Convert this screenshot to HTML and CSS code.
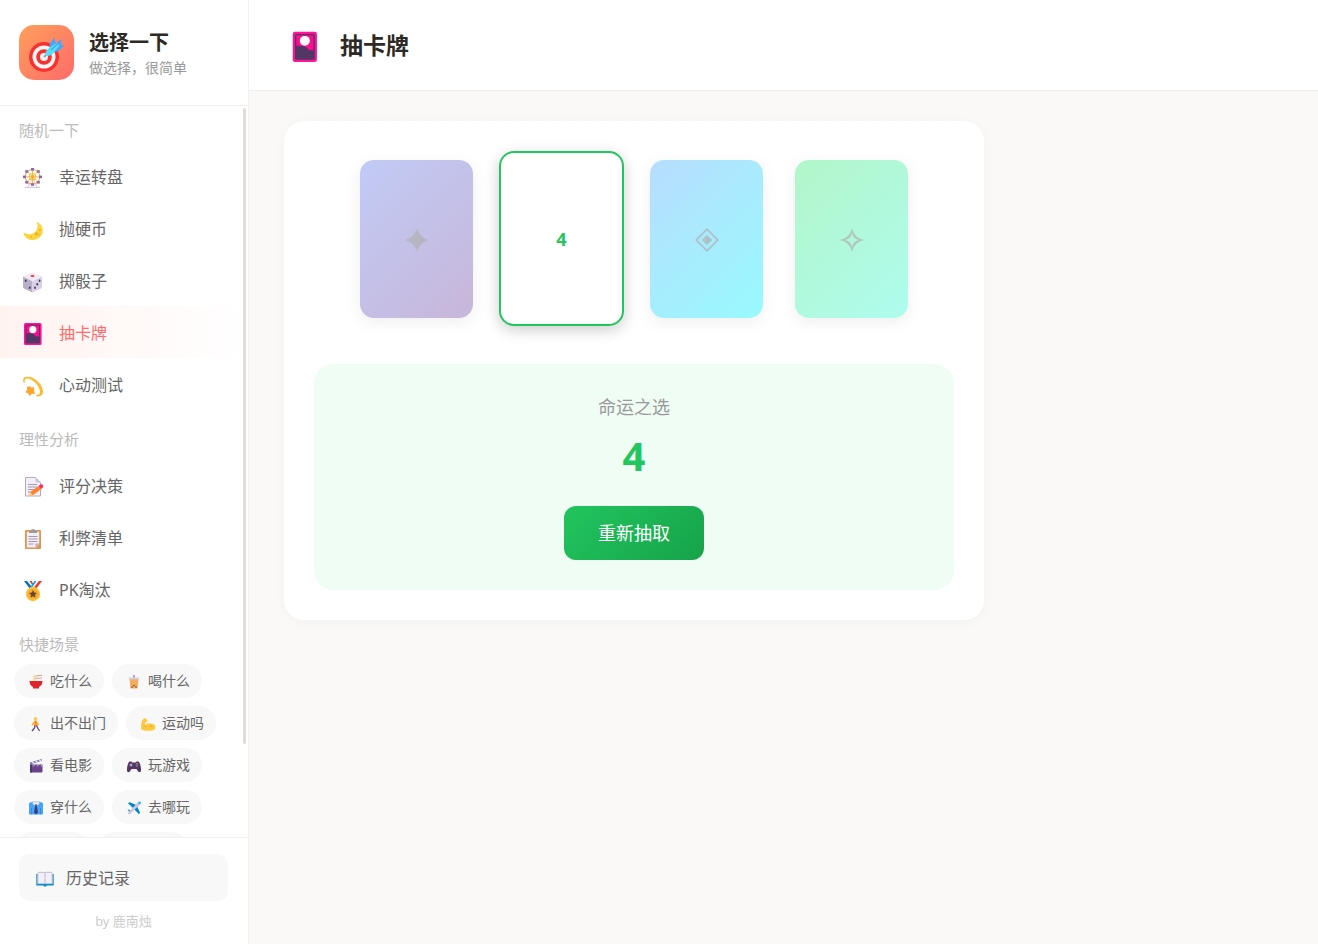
FILE: index.html
```html
<!DOCTYPE html>
<html lang="zh-CN">
<head>
    <meta charset="UTF-8">
    <meta name="viewport" content="width=device-width, initial-scale=1.0">
    <title>选择一下</title>
    <link rel="stylesheet" href="styles.css">
</head>
<body>
    <svg class="sprite" aria-hidden="true">
        <symbol id="icon-card" viewBox="0 0 24 24">
            <rect x="2" y="2" width="17.600" height="22" rx="1.600" fill="#ff1496"/>
            <rect x="3.600" y="3.600" width="14.400" height="18.800" rx="1.200" fill="#533566"/>
            <path d="M4.600 4.600h12.400v10.900c-2.600.2-3.600-.4-4.600-1.600-1-1.200-2.200-1.800-3.600-1.500C7.300 12.100 6.300 12.200 4.600 12.400z" fill="#ff0d91"/>
            <circle cx="10.800" cy="8.600" r="3.600" fill="#fff"/>
        </symbol>
    </svg>

    <div class="app">
        <aside class="sidebar">
            <div class="brand">
                <svg class="brand-logo" viewBox="0 0 55 55" aria-hidden="true">
                    <circle cx="25" cy="32" r="15" fill="#f8312f"/>
                    <circle cx="25" cy="32" r="11.500" fill="#f4f4f4"/>
                    <circle cx="25" cy="32" r="7.800" fill="#f8312f"/>
                    <circle cx="25" cy="32" r="4" fill="#f4f4f4"/>
                    <path d="M25 32l4-4" stroke="#9b9b9b" stroke-width="2"/>
                    <path d="M31 25l-.5-6 4.800-6.200 1.800 6L42 14l.2 5.500 2.800 1.300-6 5.700-7 .5z" fill="#46a4fb"/>
                    <path d="M26.500 30.500c-.8-2.500.7-5 3.500-7.500l7.500-5 3 2-5.500 7.500c-2.500 2.800-5.500 4-8.500 3z" fill="#50e2ff"/>
                    <path d="M32 25l8.500-8" stroke="#46a4fb" stroke-width="1.400"/>
                </svg>
                <div>
                    <h1 class="brand-title">选择一下</h1>
                    <p class="brand-sub">做选择，很简单</p>
                </div>
            </div>

            <div class="nav-wrap">
                <nav class="nav">
                    <section class="nav-section">
                        <h2 class="nav-label">随机一下</h2>
                        <a class="nav-item" href="#wheel">
                            <svg class="nav-icon" viewBox="0 0 24 24" aria-hidden="true">
                                <path d="M10.500 13L6 22M10.500 13L15 22" stroke="#e1d8ec" stroke-width="1.200"/>
                                <path d="M3 22.300h15" stroke="#cdc4d6"/>
                                <g fill="none" stroke="#f5bd45">
                                    <circle cx="10.500" cy="11.800" r="7.300" stroke-width="1.200"/>
                                    <circle cx="10.500" cy="11.800" r="3.400"/>
                                    <path d="M10.500 4v15.600M2.700 11.800h15.600M5 6.300l11 11M16 6.300l-11 11"/>
                                </g>
                                <g fill="#8d65c5">
                                    <rect x="9" y="3" width="3" height="2.600"/><rect x="9" y="18.200" width="3" height="2.600"/>
                                    <rect x="1" y="10.600" width="3" height="2.600"/><rect x="17" y="10.600" width="3" height="2.600"/>
                                    <rect x="3.200" y="5.200" width="3" height="2.600"/><rect x="14.800" y="5.200" width="3" height="2.600"/>
                                    <rect x="3.200" y="16" width="3" height="2.600"/><rect x="14.800" y="16" width="3" height="2.600"/>
                                </g>
                                <circle cx="10.500" cy="11.800" r="1.900" fill="#f5a928"/>
                            </svg>
                            幸运转盘
                        </a>
                        <a class="nav-item" href="#coin">
                            <svg class="nav-icon" viewBox="0 0 24 24" aria-hidden="true">
                                <path d="M15.500 5.300C14 4.600 15.400 6 15.500 8.500 15.600 13.500 12 17 7.500 17.200 5 17.300 3.500 16.400 2.300 16c-.8-.2-1 .3-.7.900C3.300 20.800 6.700 23 10.700 23c5.700 0 10.100-4.300 10.100-9.700 0-3.600-2-6.600-5.300-8z" fill="#fcd53f"/>
                                <g fill="#f3ad3b"><circle cx="14.500" cy="17" r="1.700"/><circle cx="18" cy="12.800" r="1.100"/><circle cx="9" cy="20" r="1"/><circle cx="17.300" cy="17.800" r=".7"/></g>
                            </svg>
                            抛硬币
                        </a>
                        <a class="nav-item" href="#dice">
                            <svg class="nav-icon" viewBox="0 0 24 24" aria-hidden="true">
                                <path d="M1 7.500l9.500 4.500v11.500L2 19.500c-.7-.4-1-.8-1-1.500z" fill="#b9b0c6"/>
                                <path d="M20 7.500l-9.500 4.500v11.500l8.500-4c.7-.4 1-.8 1-1.500z" fill="#d9d0e4"/>
                                <path d="M1.300 7.300L9.500 3.700c.7-.3 1.300-.3 2 0l8.200 3.600-9.200 4.900z" fill="#f0eaf6"/>
                                <ellipse cx="10.500" cy="7" rx="2" ry="1.100" fill="#f8312f"/>
                                <g fill="#433b6b"><ellipse cx="3.700" cy="11.800" rx=".9" ry="1.300"/><ellipse cx="7.800" cy="18.700" rx=".9" ry="1.300"/><ellipse cx="17.600" cy="11.800" rx=".9" ry="1.300"/><ellipse cx="15.300" cy="15.300" rx=".9" ry="1.300"/><ellipse cx="13" cy="18.700" rx=".9" ry="1.300"/></g>
                            </svg>
                            掷骰子
                        </a>
                        <a class="nav-item active" href="#card" aria-current="page">
                            <svg class="nav-icon" aria-hidden="true"><use href="#icon-card"/></svg>
                            抽卡牌
                        </a>
                        <a class="nav-item" href="#heart">
                            <svg class="nav-icon" viewBox="0 0 24 24" aria-hidden="true">
                                <path d="M1.600 9.500C0 4.500 3 2.800 8 4c6.500 1.600 12.700 8.300 13 14.500.1 3.700-2.500 5.400-6.100 4.800-1.100-.2-1.100-1.600 0-1.600 2.600 0 3.500-1.200 3.100-3.600C17.100 12.800 12.500 7.600 7.500 5.900 4 4.700 2.200 5.700 2.800 9c.1.900-.9 1.200-1.200.5z" fill="#fcb932"/>
                                <path d="M7.500 14l1.500 1.500 2.500-.4-.4 2.600 1 2.300-2.600.2-1.700 1.600-1-2.100-2.400-.7 1.700-1.900-.4-2.300z" fill="#ffa62e" stroke="#ffa62e" stroke-width="1.600" stroke-linejoin="round"/>
                            </svg>
                            心动测试
                        </a>
                    </section>

                    <section class="nav-section">
                        <h2 class="nav-label">理性分析</h2>
                        <a class="nav-item" href="#score">
                            <svg class="nav-icon" viewBox="0 0 24 24" aria-hidden="true">
                                <path d="M3.500 3.500h10l5 5v13.500h-15z" fill="#f3eef8" stroke="#b4acbc"/>
                                <path d="M13.500 3.500v5h5z" fill="#cdc4d6"/>
                                <path d="M6 10.500h9M6 13h9M6 15.500h6M6 18h3" stroke="#998ea4" stroke-width=".9"/>
                                <path d="M7 22.300l1.300-4.200 9-6.600 2.300 3.200-8.900 6.600z" fill="#ff822d"/>
                                <path d="M7 22.300l1.300-4.200 2.400 3.200z" fill="#ffce7c"/>
                                <path d="M16.800 11.800l1.700-1.200c1.700-1 3.600 1.500 2.200 2.800L19 14.900z" fill="#f92f60"/>
                            </svg>
                            评分决策
                        </a>
                        <a class="nav-item" href="#proscons">
                            <svg class="nav-icon" viewBox="0 0 24 24" aria-hidden="true">
                                <rect x="3" y="4" width="16" height="19" rx="1" fill="#dd9550"/>
                                <path d="M4.800 5.800h12.400V18l-3.400 3.500H4.800z" fill="#f3eef8"/>
                                <path d="M13.500 21.500v-4h3.700z" fill="#b4acbc"/>
                                <path d="M6.500 10.500h9M6.500 13h9M6.500 15.500h9M6.500 18h5" stroke="#998ea4" stroke-width=".9"/>
                                <path d="M7 7V5h2l.5-1.800h3L13 5h2v2z" fill="#9b9b9b"/>
                            </svg>
                            利弊清单
                        </a>
                        <a class="nav-item" href="#pk">
                            <svg class="nav-icon" viewBox="0 0 24 24" aria-hidden="true">
                                <path d="M2 3h4l6 7-3 2.200z" fill="#0074ba"/>
                                <path d="M5 3h2.500l5 6-1.500 1.500z" fill="#f4f4f4"/>
                                <path d="M7.500 3h2l3.500 5-1 1.500z" fill="#f8312f"/>
                                <path d="M20 3h-4l-6 7 3 2.200z" fill="#f8312f"/>
                                <path d="M17 3h-2.500l-5 6 1.500 1.500z" fill="#f4f4f4"/>
                                <path d="M14.500 3h-2L9 8l1 1.500z" fill="#00a6ed"/>
                                <circle cx="11" cy="16" r="7.200" fill="#fcc535"/>
                                <circle cx="11" cy="16" r="5.600" fill="#f8ad30"/>
                                <path d="M11 12l1.200 2.500 2.800.4-2 1.900.5 2.800-2.500-1.300-2.500 1.300.5-2.800-2-1.900 2.800-.4z" fill="#6d4534"/>
                            </svg>
                            PK淘汰
                        </a>
                    </section>

                    <section class="nav-section">
                        <h2 class="nav-label">快捷场景</h2>
                        <div class="chips">
                            <button class="chip" type="button">
                                <svg class="chip-icon" viewBox="0 0 16 16" aria-hidden="true">
                                    <path d="M5 2.300l9-1M5 4.400l9-.3" stroke="#e39d89"/>
                                    <path d="M4.500 7.500c0-3.500 4-3 4 0z" fill="#ffe79a"/><path d="M6 1.500v6" stroke="#ffe79a" stroke-width="1.400"/>
                                    <path d="M1.500 7h13c0 3-1.300 5-3.500 6v1.500H5V13C2.800 12 1.500 10 1.500 7z" fill="#e0242d"/>
                                </svg>
                                吃什么
                            </button>
                            <button class="chip" type="button">
                                <svg class="chip-icon" viewBox="0 0 16 16" aria-hidden="true">
                                    <path d="M8 5V1" stroke="#8d65c5" stroke-width="1.200"/>
                                    <path d="M3.500 5h9l-1 9.500h-7z" fill="#f3ad61"/>
                                    <path d="M3 3.500h10v1.800H3z" fill="#d5cfe0"/>
                                    <g fill="#7d4533"><circle cx="6" cy="13" r=".8"/><circle cx="8" cy="11.500" r=".8"/><circle cx="10" cy="13" r=".8"/></g>
                                </svg>
                                喝什么
                            </button>
                            <button class="chip" type="button">
                                <svg class="chip-icon" viewBox="0 0 16 16" aria-hidden="true">
                                    <circle cx="7.500" cy="2.800" r="1.700" fill="#ffc83d"/>
                                    <path d="M7.500 5L5 7.500l-1 2M8 6l3 3" fill="none" stroke="#ffb02e" stroke-width="1.300"/>
                                    <path d="M6.200 4.800h3l.3 5.200H6z" fill="#ff922d"/>
                                    <path d="M7 9.500L6.500 12 4 15M8.500 9.500l1.500 3 1.500 2.500" fill="none" stroke="#635078" stroke-width="1.400"/>
                                </svg>
                                出不出门
                            </button>
                            <button class="chip" type="button">
                                <svg class="chip-icon" viewBox="0 0 16 16" aria-hidden="true">
                                    <path d="M1.200 13c-.7-4.500.3-8.300 2.500-10.500C5.200 1.500 7.500 3 7.200 5c-.2 1.500-1.400 1.700-2.200 1.500v3C6.500 7 10 6.500 12 8c2.500-.3 3.700 1.700 3.200 4-.4 2-2 2.700-4.200 2.700-3.500 0-7.500.3-9.800-1.700z" fill="#ffc83d"/>
                                    <path d="M5 9.500l1 1.500M9.500 11c.8-.8 1.500-1 2.500-1" fill="none" stroke="#e59a2a" stroke-width=".8"/>
                                </svg>
                                运动吗
                            </button>
                            <button class="chip" type="button">
                                <svg class="chip-icon" viewBox="0 0 16 16" aria-hidden="true">
                                    <path d="M2 6.500h12.500v7c0 .6-.4 1-1 1H3c-.6 0-1-.4-1-1z" fill="#6b438b"/>
                                    <path d="M2 6.500h2v8H3c-.6 0-1-.4-1-1z" fill="#433b6b"/>
                                    <path d="M1.800 4.500L13.500 1l.4 1.800L2.300 6.500z" fill="#8072a8"/>
                                    <path d="M4 3.800l2 1.500M7.500 2.800l2 1.500M11 1.700l2 1.500" stroke="#f3eef8" stroke-width="1.300"/>
                                    <path d="M5 8.500l2-2M9 8.500l2-2M13 8.500l1.500-2" stroke="#cfc3e2"/>
                                </svg>
                                看电影
                            </button>
                            <button class="chip" type="button">
                                <svg class="chip-icon" viewBox="0 0 16 16" aria-hidden="true">
                                    <path d="M3.500 3.500h2l.8 1h3.400l.8-1h2c1.500 1 2.700 5.500 2.500 9-.1 2-2 2.200-3 .8L10.500 11h-5L4 13.300c-1 1.400-2.900 1.200-3-.8-.2-3.500 1-8 2.500-9z" fill="#533566"/>
                                    <path d="M3.500 7h3M5 5.500v3" stroke="#cdc4d6"/>
                                    <circle cx="10" cy="7" r=".7" fill="#00a6ed"/><circle cx="12" cy="7" r=".7" fill="#f8312f"/><circle cx="11" cy="5.800" r=".7" fill="#fcd53f"/><circle cx="11" cy="8.200" r=".7" fill="#6dc96b"/>
                                </svg>
                                玩游戏
                            </button>
                            <button class="chip" type="button">
                                <svg class="chip-icon" viewBox="0 0 16 16" aria-hidden="true">
                                    <path d="M1 4c0-1 .5-1.500 1.500-1.500L5 1.500h6l2.500 1c1 0 1.500.5 1.500 1.500v9.500c0 .6-.4 1-1 1H2c-.6 0-1-.4-1-1z" fill="#46a4fb"/>
                                    <path d="M3.500 8v6.500M12.500 8v6.500" stroke="#2d86d8" stroke-width=".7"/>
                                    <path d="M5 1.500h6l.5 2.500L8 6 4.500 4z" fill="#e6e6e6"/>
                                    <path d="M7 4.500h2L8.700 6l1.300 6.500-2 2-2-2L7.300 6z" fill="#433b6b"/>
                                </svg>
                                穿什么
                            </button>
                            <button class="chip" type="button">
                                <svg class="chip-icon" viewBox="0 0 16 16" aria-hidden="true">
                                    <path d="M2 3.200l1.500-1L10.500 5 7 8zM13 14.200l1-1.500L11 6 8 9z" fill="#0084ce"/>
                                    <path d="M1.500 9.500l3 .5-1 1 1.500 3z" fill="#0084ce"/>
                                    <path d="M3 14.800l-1.200-1.600L11.500 2.800c1.200-1 3-1.200 3.200-.8.300.4 0 2-1.100 3.100z" fill="#cdc4d6"/>
                                    <path d="M11.500 2.800c1.200-1 3-1.200 3.200-.8.300.4 0 1.500-.7 2.500z" fill="#26b3f0"/>
                                </svg>
                                去哪玩
                            </button>
                            <button class="chip" type="button">
                                <svg class="chip-icon" viewBox="0 0 16 16" aria-hidden="true">
                                    <rect x="2" y="5" width="12" height="9" fill="#f92f60"/><path d="M8 5v9M2 8h12" stroke="#fcd53f" stroke-width="2"/>
                                </svg>
                                送礼
                            </button>
                            <button class="chip" type="button">
                                <svg class="chip-icon" viewBox="0 0 16 16" aria-hidden="true">
                                    <path d="M1 3h2.500l2 7h7L14 5H4.500" fill="none" stroke="#533566"/><circle cx="6" cy="13" r="1.200" fill="#533566"/><circle cx="12" cy="13" r="1.200" fill="#533566"/>
                                </svg>
                                买不买
                            </button>
                        </div>
                    </section>
                </nav>
                <div class="scroll-thumb"></div>
            </div>

            <div class="sidebar-footer">
                <button class="history-btn" type="button">
                    <svg class="history-icon" viewBox="0 0 18 18" aria-hidden="true">
                        <path d="M.3 5h17.400v11.500h-7l-.5 1H7.800l-.5-1h-7z" fill="#1489c9"/>
                        <path d="M1.200 5h15.600v9.800H1.200z" fill="#6cc8f2"/>
                        <path d="M1.800 4c.3-.5.700-.7 1.200-.7h4.500c.8 0 1.500.4 1.500.9 0-.5.700-.9 1.500-.9H15c.5 0 .9.200 1.200.7v10.500H1.800z" fill="#f3eef8"/>
                        <path d="M1.800 14.500V4c.3-.5.700-.7 1.200-.7h4.500c.8 0 1.500.4 1.500.9v10.300M9 4.200c0-.5.700-.9 1.500-.9H15c.5 0 .9.200 1.200.7v10.500" fill="none" stroke="#b4acbc" stroke-width=".8"/>
                    </svg>
                    历史记录
                </button>
                <p class="credit">by 鹿南烛</p>
            </div>
        </aside>

        <main class="main">
            <header class="page-header">
                <svg class="page-icon" aria-hidden="true"><use href="#icon-card"/></svg>
                <h2 class="page-title">抽卡牌</h2>
            </header>

            <div class="page-body">
                <div class="panel">
                    <div class="cards">
                        <button class="card card-violet" type="button" aria-label="1">
                            <svg class="card-symbol" viewBox="0 0 24 24" aria-hidden="true"><path d="M12 0c1.500 6 6 10.500 12 12-6 1.500-10.500 6-12 12C10.500 18 6 13.500 0 12 6 10.500 10.500 6 12 0z" fill="currentColor"/></svg>
                        </button>
                        <button class="card picked" type="button">4</button>
                        <button class="card card-sky" type="button" aria-label="3">
                            <svg class="card-symbol" viewBox="0 0 24 24" aria-hidden="true"><path d="M12 1.200L22.800 12 12 22.800 1.200 12z" fill="none" stroke="currentColor" stroke-width="1.800"/><path d="M12 6.800l5.200 5.200-5.200 5.200L6.800 12z" fill="currentColor"/></svg>
                        </button>
                        <button class="card card-mint" type="button" aria-label="4">
                            <svg class="card-symbol" viewBox="0 0 24 24" aria-hidden="true"><path fill-rule="evenodd" d="M12 0c1.500 6.500 5.500 10.500 12 12-6.500 1.500-10.500 5.500-12 12C10.500 17.500 6.500 13.500 0 12 6.500 10.500 10.500 6.500 12 0zM12 4.500c-.8 4.500-3 6.700-7.500 7.500 4.500.8 6.700 3 7.500 7.500.8-4.500 3-6.700 7.500-7.500-4.500-.8-6.700-3-7.500-7.500z" fill="currentColor"/></svg>
                        </button>
                    </div>

                    <div class="result">
                        <p class="result-label">命运之选</p>
                        <p class="result-value">4</p>
                        <button class="redraw-btn" type="button">重新抽取</button>
                    </div>
                </div>
            </div>
        </main>
    </div>
</body>
</html>
```
FILE: styles.css
```css
* {
    box-sizing: border-box;
    margin: 0;
    padding: 0;
}

body {
    font-family: "Noto Sans", "Noto Sans CJK SC", sans-serif;
    font-size: 16px;
    color: #666;
    background: #faf9f8;
}

button {
    font-family: inherit;
    border: none;
    cursor: pointer;
}

svg {
    flex-shrink: 0;
}

.sprite {
    display: none;
}

.app {
    display: flex;
    height: 100vh;
}

/* sidebar */
.sidebar {
    display: flex;
    flex-direction: column;
    flex: 0 0 249px;
    background: #fff;
    border-right: 1px solid #f0f0f0;
}

.brand {
    display: flex;
    align-items: center;
    gap: 15px;
    padding: 25px 19px;
    border-bottom: 1px solid #f0f0f0;
}

.brand-logo {
    width: 55px;
    height: 55px;
    border-radius: 15px;
    background: linear-gradient(135deg, #ff9f5a, #ff6b6b);
}

.brand-title {
    padding-top: 2px;
    font-size: 20px;
    line-height: 28px;
    font-weight: 700;
    color: #2d2a26;
}

.brand-sub {
    font-size: 14px;
    line-height: 22px;
    color: #999;
}

.nav-wrap {
    position: relative;
    flex: 1;
    min-height: 0;
}

.nav {
    height: 100%;
    overflow-y: auto;
    scrollbar-width: none;
}

.scroll-thumb {
    position: absolute;
    top: 2px;
    right: 2px;
    width: 3px;
    height: 87%;
    border-radius: 2px;
    background: #ddd;
}

.nav-section {
    margin-bottom: 5px;
}

.nav-label {
    padding: 13px 19px 9px;
    font-size: 15px;
    line-height: 22px;
    font-weight: 400;
    color: #bbb;
}

.nav-item {
    display: flex;
    align-items: center;
    gap: 13px;
    height: 52px;
    padding: 0 22px;
    color: #666;
    text-decoration: none;
}

.nav-item.active {
    color: #ff6b6b;
    background: linear-gradient(90deg, #fff3f0, #fff);
}

.nav-icon {
    width: 24px;
    height: 24px;
    margin-top: 2px;
}

.chips {
    display: flex;
    flex-wrap: wrap;
    gap: 8px;
    padding: 0 14px 14px;
}

.chip {
    display: flex;
    align-items: center;
    gap: 6px;
    height: 34px;
    padding: 0 12px 2px 14px;
    font-size: 14px;
    color: #666;
    background: #f8f8f8;
    border-radius: 17px;
}

.chip-icon {
    width: 16px;
    height: 16px;
    margin-top: 4px;
}

.sidebar-footer {
    padding: 16px 20px 14px 19px;
    border-top: 1px solid #f0f0f0;
}

.history-btn {
    display: flex;
    align-items: center;
    gap: 12px;
    width: 100%;
    height: 47px;
    padding: 0 17px 2px;
    font-size: 16px;
    color: #666;
    background: #f8f8f8;
    border-radius: 10px;
}

.history-icon {
    width: 18px;
    height: 18px;
    margin-top: 2px;
}

.credit {
    margin-top: 11px;
    font-size: 13px;
    line-height: 18px;
    text-align: center;
    color: #ccc;
}

/* main */
.main {
    flex: 1;
    min-width: 0;
    overflow-y: auto;
}

.page-header {
    display: flex;
    align-items: center;
    gap: 17px;
    height: 91px;
    padding: 0 41px;
    background: #fff;
    border-bottom: 1px solid #f0f0f0;
}

.page-icon {
    width: 33px;
    height: 33px;
}

.page-title {
    font-size: 23px;
    line-height: 32px;
    font-weight: 700;
    color: #2d2a26;
}

.page-body {
    padding: 30px 35px;
}

.panel {
    max-width: 700px;
    padding: 30px;
    background: #fff;
    border-radius: 20px;
    box-shadow: 0 2px 12px rgba(0, 0, 0, 0.03);
}

.cards {
    display: flex;
    flex-wrap: wrap;
    justify-content: center;
    align-items: center;
    gap: 20px;
    margin-bottom: 38px;
}

.card {
    display: flex;
    align-items: center;
    justify-content: center;
    width: 113px;
    height: 158px;
    margin: 0 6px;
    padding-top: 3px;
    border-radius: 14px;
    color: rgba(60, 60, 60, 0.7);
    opacity: 0.4;
    box-shadow: 0 4px 14px rgba(0, 0, 0, 0.15);
}

.card-violet {
    background: linear-gradient(135deg, #667eea, #764ba2);
}

.card-sky {
    background: linear-gradient(135deg, #4facfe, #00f2fe);
}

.card-mint {
    background: linear-gradient(135deg, #43e97b, #38f9d7);
}

.card.picked {
    width: 125px;
    height: 175px;
    margin: 0;
    padding-top: 0;
    font-size: 18px;
    font-weight: 700;
    color: #22c55e;
    background: #fff;
    border: 2px solid #22c55e;
    border-radius: 15px;
    opacity: 1;
    box-shadow: 0 4px 15px rgba(0, 0, 0, 0.2);
}

.card-symbol {
    width: 24px;
    height: 24px;
}

.result {
    padding: 30px;
    text-align: center;
    background: #f0fdf4;
    border-radius: 20px;
}

.result-label {
    font-size: 18px;
    line-height: 26px;
    color: #999;
}

.result-value {
    margin: 8px 0 22px;
    font-size: 40px;
    line-height: 56px;
    font-weight: 700;
    color: #22c55e;
}

.redraw-btn {
    height: 54px;
    padding: 0 34px 2px;
    font-size: 18px;
    color: #fff;
    background: linear-gradient(135deg, #22c55e, #16a34a);
    border-radius: 12px;
    vertical-align: top;
}
```
